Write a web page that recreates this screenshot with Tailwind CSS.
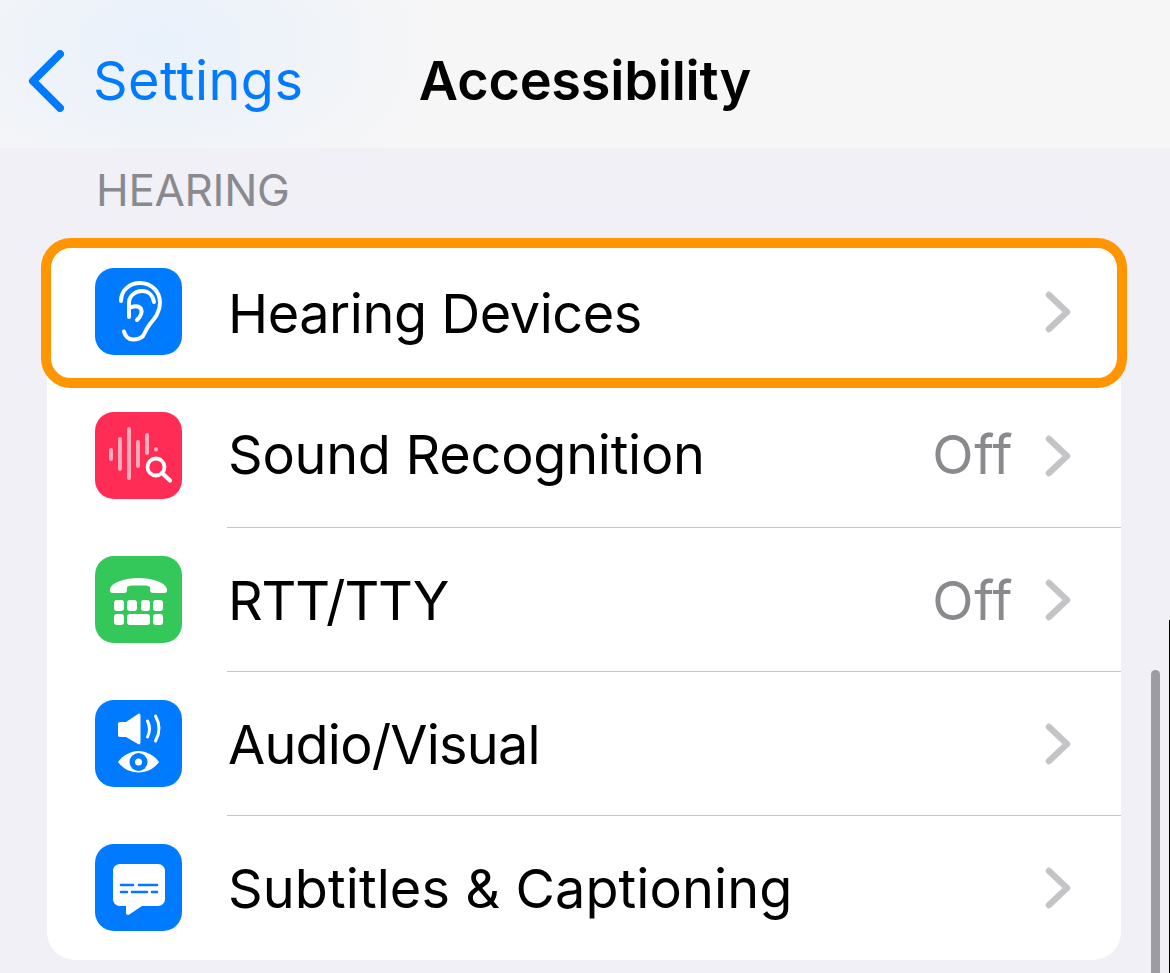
<!DOCTYPE html>
<html lang="en">
<head>
    <meta charset="UTF-8">
    <meta name="viewport" content="width=device-width, initial-scale=1.0">
    <title>Accessibility</title>
    <script src="https://cdn.jsdelivr.net/npm/@tailwindcss/browser@4"></script>
</head>
<body class="font-['Inter',sans-serif] bg-[#f0f0f6]">
    <div class="relative w-[1170px] h-[973px] overflow-hidden bg-[#f0f0f6]">

        <!-- nav bar -->
        <header class="h-[148px] grid grid-cols-[1fr_auto_1fr] items-center pt-[13px] bg-[#f6f6f7] bg-[radial-gradient(ellipse_280px_170px_at_160px_45px,#e9f1fb,transparent)]">
            <div class="flex items-center pl-[28px] gap-[29px] text-[#007aff]">
                <svg width="36" height="62" viewBox="0 0 36 62" fill="none" stroke="currentColor" stroke-width="8" stroke-linecap="round" stroke-linejoin="round"><path d="M32 4 5 31l27 27"/></svg>
                <span class="text-[54px] leading-none tracking-[0.45px]">Settings</span>
            </div>
            <h1 class="text-[54px] leading-none font-semibold tracking-[-0.2px] text-black">Accessibility</h1>
            <div></div>
        </header>

        <main class="pt-[19px]">
            <h2 class="pl-[96px] text-[44px] leading-[47px] text-[#8a8a8e] tracking-[-0.3px]">HEARING</h2>

            <ul class="mt-[26px] mx-[47px] w-[1074px] bg-white rounded-[28px]">
                <li class="h-[144px] flex items-center pl-[48px] pr-[50px]">
                    <div class="w-[87px] h-[87px] -mt-[2px] rounded-[19px] bg-[#007aff] shrink-0">
                        <svg viewBox="0 0 87 87" fill="none" stroke="white" stroke-width="4" stroke-linecap="round" stroke-linejoin="round"><path d="M26 33C26 22 35 15 45 15c11 0 20 8 20 20 0 9-5 15-10 21-4 5-5 9-7 12-3 3-6 3.500-10 3.500-5 0-8-4-9-8"/><path d="M34 49V35c0-7 6-12 13-12 6 0 11 4 12 11"/><path d="M34 40c4-2 10-3 12 1 2 4-1 8-4 11"/></svg>
                    </div>
                    <span class="ml-[46px] mt-[3px] text-[54px] leading-none tracking-[-0.45px] text-black flex-1">Hearing Devices</span>
                    <svg class="shrink-0" width="26" height="42" viewBox="0 0 26 42" fill="none" stroke="#c4c4c7" stroke-width="6.500" stroke-linecap="round" stroke-linejoin="round"><path d="M4 4l18 17L4 38"/></svg>
                </li>
                <li class="h-[144px] flex items-center pl-[48px] pr-[50px]">
                    <div class="w-[87px] h-[87px] -mt-[2px] rounded-[19px] bg-[#ff2d55] shrink-0">
                        <svg viewBox="0 0 87 87" fill="none" stroke-linecap="round"><g stroke="white" stroke-opacity=".6" stroke-width="4"><path d="M16 38v9M25 27v30M34 17v49M43 30v24M52 23v18M61 37v0.500"/></g><circle cx="61" cy="55" r="8.500" stroke="white" stroke-width="3.800"/><path d="M67 61l8 7.500" stroke="white" stroke-width="4.200"/></svg>
                    </div>
                    <span class="ml-[46px] -mt-[3px] text-[54px] leading-none tracking-[-0.25px] text-black flex-1">Sound Recognition</span>
                    <span class="-mt-[3px] text-[54px] leading-none tracking-[0.5px] text-[#8a8a8e] mr-[32px]">Off</span>
                    <svg class="shrink-0" width="26" height="42" viewBox="0 0 26 42" fill="none" stroke="#c4c4c7" stroke-width="6.500" stroke-linecap="round" stroke-linejoin="round"><path d="M4 4l18 17L4 38"/></svg>
                </li>
                <li class="h-[144px] flex items-center pl-[48px] pr-[50px]">
                    <div class="w-[87px] h-[87px] -mt-[2px] rounded-[19px] bg-[#34c759] shrink-0">
                        <svg viewBox="0 0 87 87" fill="white"><path d="M15 33C17 26 30 22 43.500 22S70 26 72 33C72.500 36 71 37 69 37H58C56 37 55 36 55 34V32C55 30 53 30 50 29.500H37C34 30 32 30 32 32V34C32 36 31 37 29 37H18C16 37 14.500 36 15 33Z"/><rect x="19" y="44" width="10" height="11" rx="3"/><rect x="32" y="44" width="10" height="11" rx="3"/><rect x="46" y="44" width="9" height="11" rx="3"/><rect x="58" y="44" width="10" height="11" rx="3"/><rect x="19" y="58" width="10" height="11" rx="3"/><rect x="32" y="58" width="23" height="11" rx="3"/><rect x="58" y="58" width="10" height="11" rx="3"/></svg>
                    </div>
                    <span class="ml-[46px] mt-[1px] text-[54px] leading-none tracking-[-1.2px] text-black flex-1">RTT/TTY</span>
                    <span class="mt-[1px] text-[54px] leading-none tracking-[0.5px] text-[#8a8a8e] mr-[32px]">Off</span>
                    <svg class="shrink-0" width="26" height="42" viewBox="0 0 26 42" fill="none" stroke="#c4c4c7" stroke-width="6.500" stroke-linecap="round" stroke-linejoin="round"><path d="M4 4l18 17L4 38"/></svg>
                </li>
                <li class="h-[144px] flex items-center pl-[48px] pr-[50px]">
                    <div class="w-[87px] h-[87px] -mt-[2px] rounded-[19px] bg-[#007aff] shrink-0">
                        <svg viewBox="0 0 87 87" fill="none"><path d="M25 22h6l12-8c1.500-1 2.500 0 2.500 2v26c0 2-1 3-2.500 2L31 37h-6c-1.500 0-2-1-2-2V24c0-1 .500-2 2-2z" fill="white"/><path d="M52.500 21c2.500 5 2.500 11 0 16M60.500 16c4.500 8 4.500 17 0 25" stroke="white" stroke-width="3" stroke-linecap="round"/><path d="M23 62c5-7 13-11 20.500-11S59 55 64 62c-5 7-13 10.500-20.500 10.500S28 69 23 62z" fill="white"/><circle cx="43.500" cy="62" r="9" fill="#007aff"/><circle cx="43.500" cy="62" r="3.500" fill="white"/></svg>
                    </div>
                    <span class="ml-[46px] mt-[1px] text-[54px] leading-none tracking-[-0.8px] text-black flex-1">Audio/Visual</span>
                    <svg class="shrink-0" width="26" height="42" viewBox="0 0 26 42" fill="none" stroke="#c4c4c7" stroke-width="6.500" stroke-linecap="round" stroke-linejoin="round"><path d="M4 4l18 17L4 38"/></svg>
                </li>
                <li class="h-[144px] flex items-center pl-[48px] pr-[50px]">
                    <div class="w-[87px] h-[87px] -mt-[2px] rounded-[19px] bg-[#007aff] shrink-0">
                        <svg viewBox="0 0 87 87" fill="none"><path d="M25 20h38c4 0 7 3 7 7v28c0 4-3 7-7 7H47L35 70c-2 1.500-4 1-4-1v-7h-6c-4 0-7-3-7-7V27c0-4 3-7 7-7z" fill="white"/><path d="M26 41h12M44 41h18M26 48h6M37 48h15M57 48h5" stroke="#007aff" stroke-width="2.600" stroke-linecap="round"/></svg>
                    </div>
                    <span class="ml-[46px] mt-[1px] text-[54px] leading-none tracking-[0.1px] text-black flex-1">Subtitles &amp; Captioning</span>
                    <svg class="shrink-0" width="26" height="42" viewBox="0 0 26 42" fill="none" stroke="#c4c4c7" stroke-width="6.500" stroke-linecap="round" stroke-linejoin="round"><path d="M4 4l18 17L4 38"/></svg>
                </li>
            </ul>
        </main>

        <!-- row separators -->
        <div class="absolute left-[227px] right-[49px] top-[527px] h-px bg-[#c6c6c8]"></div>
        <div class="absolute left-[227px] right-[49px] top-[671px] h-px bg-[#c6c6c8]"></div>
        <div class="absolute left-[227px] right-[49px] top-[815px] h-px bg-[#c6c6c8]"></div>

        <!-- orange highlight -->
        <div class="absolute left-[41px] top-[238px] w-[1086px] h-[150px] border-[10px] border-[#ff9500] rounded-[30px]"></div>

        <!-- scroll indicator -->
        <div class="absolute left-[1151px] top-[670px] w-[9px] h-[320px] rounded-full bg-[#9c9ca1]"></div>
        <div class="absolute left-[1169px] top-[620px] w-px h-[353px] bg-black"></div>
    </div>
</body>
</html>
